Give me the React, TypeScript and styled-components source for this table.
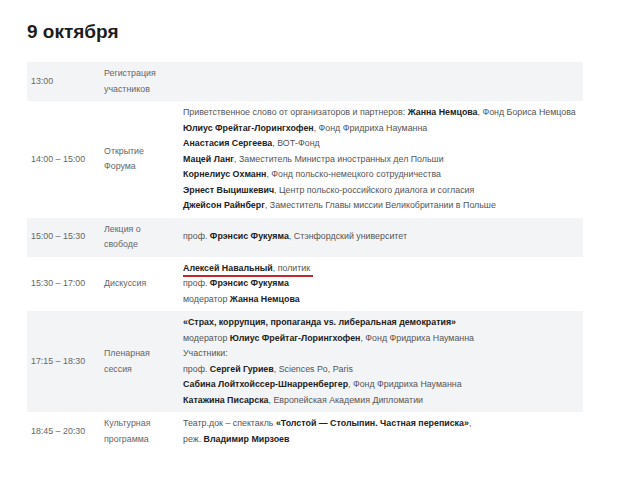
import React from "react";
import styled, { createGlobalStyle } from "styled-components";

const Global = createGlobalStyle`
  html, body { margin: 0; padding: 0; background: #fff; }
  body { font-family: "Liberation Sans", Arial, sans-serif; }
`;

const Page = styled.div`
  width: 620px;
  height: 481px;
  padding: 20px 37px 0 27px;
  box-sizing: border-box;
  overflow: hidden;
`;

const Title = styled.h2`
  margin: 0 0 18px 0;
  font-size: 19px;
  line-height: 24px;
  font-weight: 700;
  color: #1c1c1c;
`;

const Table = styled.div`
  display: flex;
  flex-direction: column;
`;

const Row = styled.div<{ $shade?: boolean }>`
  display: grid;
  grid-template-columns: 73px 83px 1fr;
  align-items: center;
  padding: 4px 0 4px 0;
  background: ${(p) => (p.$shade ? "#f3f4f6" : "#ffffff")};
  font-size: 8.85px;
  line-height: 15.5px;
`;

const Time = styled.div`
  padding-left: 4px;
  color: #666;
`;

const Label = styled.div`
  padding-left: 4px;
  color: #666;
`;

const Content = styled.div`
  color: #555;
`;

const Line = styled.div`
  white-space: nowrap;
`;

const B = styled.b`
  font-weight: 700;
  color: #222;
`;

const Marked = styled.span`
  position: relative;
  &::after {
    content: "";
    position: absolute;
    left: 0;
    right: -3px;
    bottom: -4px;
    height: 2px;
    background: #c1272d;
  }
`;

export default function App() {
  return (
    <>
      <Global />
      <Page>
        <Title>9 октября</Title>
        <Table>
          <Row $shade>
            <Time>13:00</Time>
            <Label>
              Регистрация
              <br />
              участников
            </Label>
            <Content />
          </Row>
          <Row>
            <Time>14:00 – 15:00</Time>
            <Label>
              Открытие
              <br />
              Форума
            </Label>
            <Content>
              <Line>
                Приветственное слово от организаторов и партнеров: <B>Жанна Немцова</B>, Фонд Бориса Немцова
              </Line>
              <Line>
                <B>Юлиус Фрейтаг-Лорингхофен</B>, Фонд Фридриха Науманна
              </Line>
              <Line>
                <B>Анастасия Сергеева</B>, ВОТ-Фонд
              </Line>
              <Line>
                <B>Мацей Ланг</B>, Заместитель Министра иностранных дел Польши
              </Line>
              <Line>
                <B>Корнелиус Охманн</B>, Фонд польско-немецкого сотрудничества
              </Line>
              <Line>
                <B>Эрнест Выцишкевич</B>, Центр польско-российского диалога и согласия
              </Line>
              <Line>
                <B>Джейсон Райнберг</B>, Заместитель Главы миссии Великобритании в Польше
              </Line>
            </Content>
          </Row>
          <Row $shade>
            <Time>15:00 – 15:30</Time>
            <Label>
              Лекция о
              <br />
              свободе
            </Label>
            <Content>
              <Line>
                проф. <B>Фрэнсис Фукуяма</B>, Стэнфордский университет
              </Line>
            </Content>
          </Row>
          <Row>
            <Time>15:30 – 17:00</Time>
            <Label>Дискуссия</Label>
            <Content>
              <Line>
                <Marked>
                  <B>Алексей Навальный</B>, политик
                </Marked>
              </Line>
              <Line>
                проф. <B>Фрэнсис Фукуяма</B>
              </Line>
              <Line>
                модератор <B>Жанна Немцова</B>
              </Line>
            </Content>
          </Row>
          <Row $shade>
            <Time>17:15 – 18:30</Time>
            <Label>
              Пленарная
              <br />
              сессия
            </Label>
            <Content>
              <Line>
                <B>«Страх, коррупция, пропаганда vs. либеральная демократия»</B>
              </Line>
              <Line>
                модератор <B>Юлиус Фрейтаг-Лорингхофен</B>, Фонд Фридриха Науманна
              </Line>
              <Line>Участники:</Line>
              <Line>
                проф. <B>Сергей Гуриев</B>, Sciences Po, Paris
              </Line>
              <Line>
                <B>Сабина Лойтхойссер-Шнарренбергер</B>, Фонд Фридриха Науманна
              </Line>
              <Line>
                <B>Катажина Писарска</B>, Европейская Академия Дипломатии
              </Line>
            </Content>
          </Row>
          <Row>
            <Time>18:45 – 20:30</Time>
            <Label>
              Культурная
              <br />
              программа
            </Label>
            <Content>
              <Line>
                Театр.док – спектакль <B>«Толстой — Столыпин. Частная переписка»</B>,
              </Line>
              <Line>
                реж. <B>Владимир Мирзоев</B>
              </Line>
            </Content>
          </Row>
        </Table>
      </Page>
    </>
  );
}
